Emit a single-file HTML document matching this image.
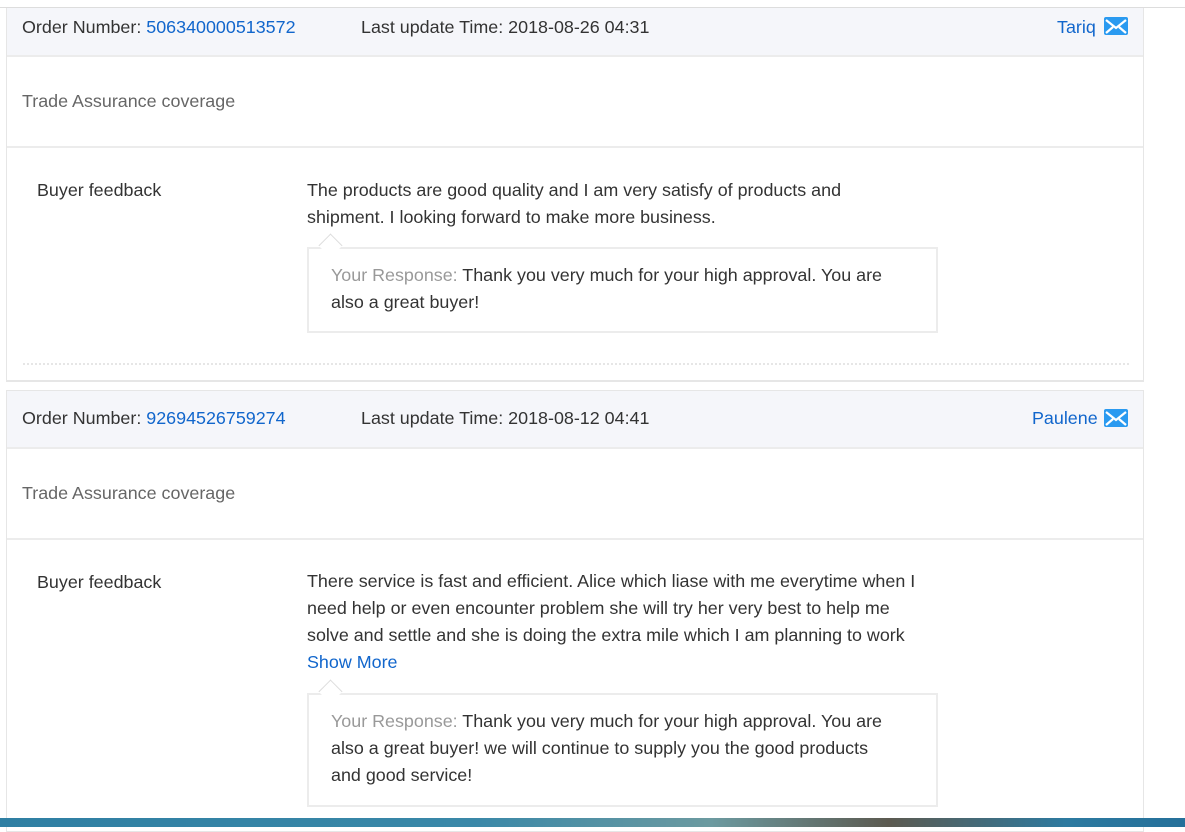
<!DOCTYPE html>
<html><head><style>
body{margin:0;width:1185px;height:827px;overflow:hidden;background:#fff;font-family:"Liberation Sans",Arial,sans-serif;font-size:17.9px;color:#333;position:relative}
.a{position:absolute;white-space:nowrap}
.card{position:absolute;left:6px;width:1136px;border:1px solid #e6e6e6;border-top:none}
.hd{position:absolute;left:0;right:0;background:#f5f6fa;border-bottom:2px solid #ececec}
.blue{color:#1166cc}
.gray{color:#666}
.resp{position:absolute;left:300px;width:627px;border:2px solid #ececec;background:#fff}
.arrow{position:absolute;left:13px;top:-12px;width:16px;height:16px;background:#fff;border-left:1px solid #ddd;border-top:1px solid #ddd;transform:rotate(45deg)}
.mail{position:absolute;width:24px;height:18px}
</style></head><body>
<div class="a" style="left:0;top:7px;width:1185px;height:1px;background:#ddd"></div>

<div class="card" style="top:8px;height:372px;border-bottom:2px solid #e6e6e6">
 <div class="hd" style="top:0;height:47px"></div>
 <div class="a" style="left:15px;top:9px">Order Number: <span class="blue">506340000513572</span></div>
 <div class="a" style="left:354px;top:9px">Last update Time: 2018-08-26 04:31</div>
 <div class="a blue" style="left:1050px;top:9px">Tariq</div>
 <svg class="mail" style="left:1097px;top:9px" viewBox="0 0 24 18"><rect width="24" height="18" rx="2" fill="#2a9af0"/><path d="M2 3l10 8 10-8M2 16l7-6M22 16l-7-6" stroke="#fff" stroke-width="2.2" fill="none"/></svg>
 <div class="a" style="left:0;right:0;top:138px;height:2px;background:#ececec"></div>
 <div class="a gray" style="left:15px;top:83px">Trade Assurance coverage</div>
 <div class="a" style="left:30px;top:172px">Buyer feedback</div>
 <div class="a" style="left:300px;top:169px;line-height:27px">The products are good quality and I am very satisfy of products and<br>shipment. I looking forward to make more business.</div>
 <div class="resp" style="top:239px;height:82px"><div class="arrow"></div>
  <div class="a" style="left:22px;top:13px;line-height:27px"><span style="color:#999">Your Response:</span> Thank you very much for your high approval. You are<br>also a great buyer!</div></div>
 <div class="a" style="left:16px;width:1106px;top:355px;border-top:2px dotted #e6e6e6"></div>
</div>

<div class="card" style="top:390px;height:440px;border-top:1px solid #e6e6e6">
 <div class="hd" style="top:0;height:56px"></div>
 <div class="a" style="left:15px;top:17px">Order Number: <span class="blue">92694526759274</span></div>
 <div class="a" style="left:354px;top:17px">Last update Time: 2018-08-12 04:41</div>
 <div class="a blue" style="left:1025px;top:17px">Paulene</div>
 <svg class="mail" style="left:1097px;top:18px" viewBox="0 0 24 18"><rect width="24" height="18" rx="2" fill="#2a9af0"/><path d="M2 3l10 8 10-8M2 16l7-6M22 16l-7-6" stroke="#fff" stroke-width="2.2" fill="none"/></svg>
 <div class="a" style="left:0;right:0;top:147px;height:2px;background:#ececec"></div>
 <div class="a gray" style="left:15px;top:92px">Trade Assurance coverage</div>
 <div class="a" style="left:30px;top:181px">Buyer feedback</div>
 <div class="a" style="left:300px;top:177px;line-height:27px">There service is fast and efficient. Alice which liase with me everytime when I<br>need help or even encounter problem she will try her very best to help me<br>solve and settle and she is doing the extra mile which I am planning to work<br><span class="blue">Show More</span></div>
 <div class="resp" style="top:302px;height:110px"><div class="arrow"></div>
  <div class="a" style="left:22px;top:13px;line-height:27px"><span style="color:#999">Your Response:</span> Thank you very much for your high approval. You are<br>also a great buyer! we will continue to supply you the good products<br>and good service!</div></div>
</div>

<div class="a" style="left:0;top:818px;width:1185px;height:9px;background:linear-gradient(90deg,#2f7fa3 0%,#3a88a8 40%,#6c9aa0 60%,#5c5a50 75%,#2d7aa0 90%,#25709a 100%)"></div>
</body></html>
